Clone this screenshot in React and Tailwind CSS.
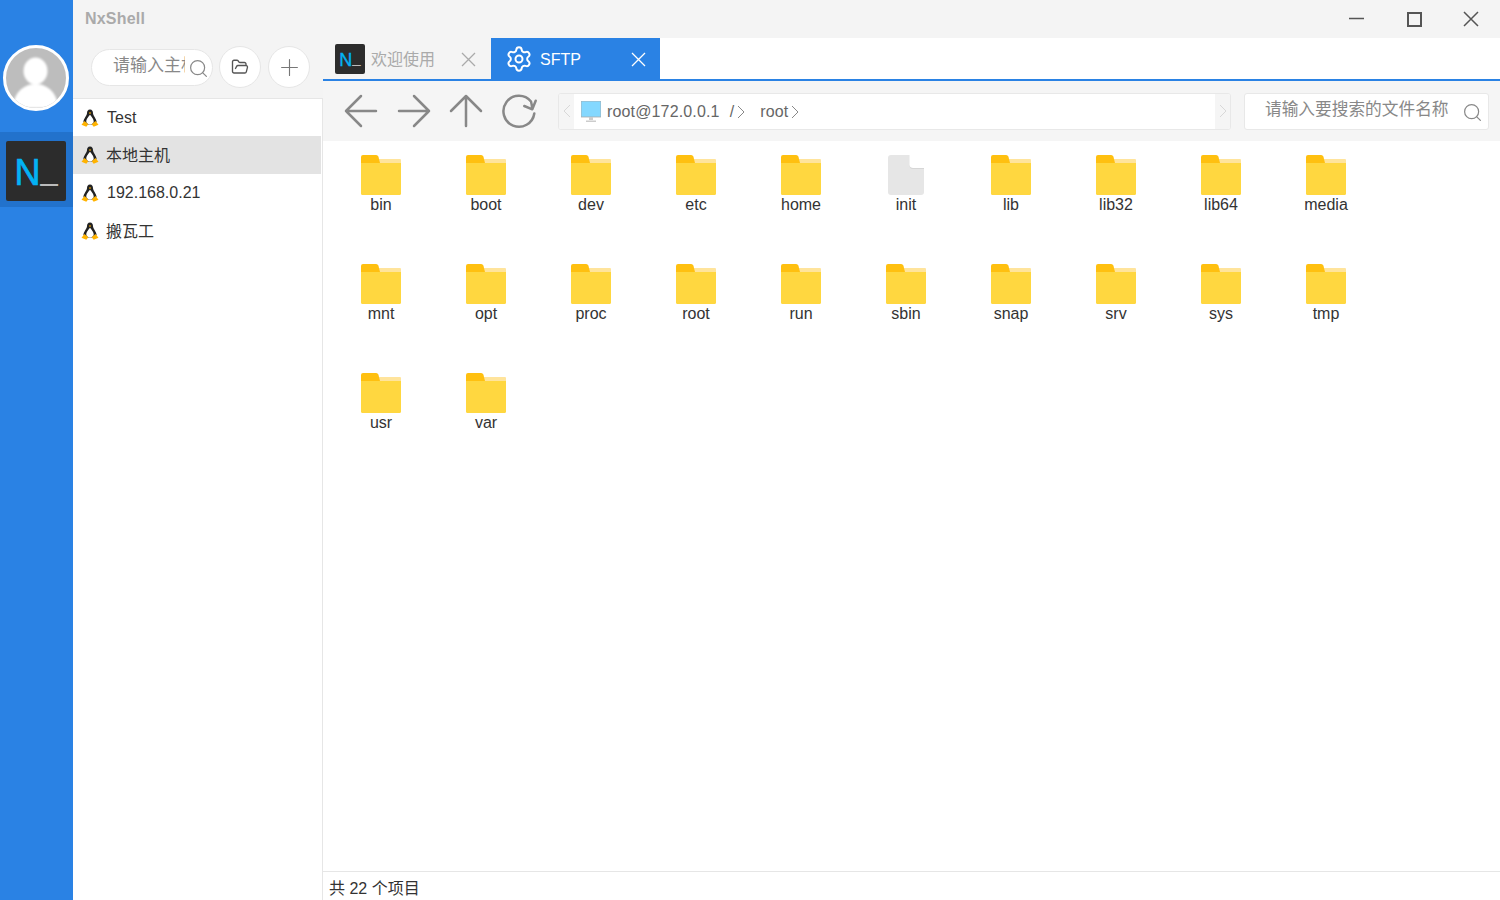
import { FolderOpen, Plus, Search, Settings } from "lucide-react";

const row1 = ["bin", "boot", "dev", "etc", "home", "init", "lib", "lib32", "lib64", "media"];
const row2 = ["mnt", "opt", "proc", "root", "run", "sbin", "snap", "srv", "sys", "tmp"];
const row3 = ["usr", "var"];
const files = [...row1, ...row2, ...row3];

const hosts = [
    { name: "Test", textClass: "" },
    { name: "本地主机", textClass: "-ml-[1px] mt-[1px]" },
    { name: "192.168.0.21", textClass: "" },
    { name: "搬瓦工", textClass: "-ml-[1px] mt-[1px]" },
];

function Penguin() {
    return (
        <svg width="18" height="18" viewBox="0 0 18 18" className="shrink-0">
            <path d="M9 0.500c-2.200 0-3 1.800-3 3.800 0 2.200-3.200 5-3.600 8.700l2 2.500h9.200l2-2.500C15.200 9.300 12 6.500 12 4.300 12 2.300 11.200 0.500 9 0.500z" fill="#222" />
            <path d="M9 5.800c-1 1.300-3.700 4.200-3.700 6.700 0 1.600 1.500 2.900 3.700 2.900s3.700-1.300 3.700-2.900c0-2.500-2.700-5.400-3.700-6.700z" fill="#fff" />
            <path d="M7.800 3.600h2.400L9 5.200z" fill="#ffb300" />
            <path d="M3.500 12 0.500 15.700l4.800 2 2-2.400zM14.500 12l3 3.700-4.800 2-2-2.400z" fill="#ffb300" />
        </svg>
    );
}

function Folder() {
    return (
        <svg width="40" height="40" viewBox="0 0 40 40">
            <path d="M18 4h21a1 1 0 0 1 1 1v5H18z" fill="#ffe49c" />
            <path d="M0 2a2 2 0 0 1 2-2h13c1.500 0 2.300 1 2.600 2.200L19 8v2H0z" fill="#ffc010" />
            <path d="M0 8h40v30.500a1.500 1.500 0 0 1-1.500 1.500H1.500A1.500 1.500 0 0 1 0 38.500z" fill="#ffd740" />
        </svg>
    );
}

function FileIcon() {
    return (
        <svg width="40" height="40" viewBox="0 0 40 40">
            <path d="M2 3a3 3 0 0 1 3-3h18.500v9.500a3.500 3.500 0 0 0 3.500 3.500h11v24a3 3 0 0 1-3 3H5a3 3 0 0 1-3-3z" fill="#e6e6e6" />
            <path d="M23.500 9.500a3.500 3.500 0 0 0 3.500 3.500h11v1H27a3.500 3.500 0 0 1-3.500-3.500z" fill="#d6d6d6" />
        </svg>
    );
}

function NavIcon({ d }) {
    return (
        <svg width="36" height="36" viewBox="0 0 36 36" fill="none" stroke="#888" strokeWidth="2.500" strokeLinecap="round" strokeLinejoin="round">
            <path d={d} />
        </svg>
    );
}

function CloseX({ stroke }) {
    return (
        <svg width="15" height="15" viewBox="0 0 15 15" fill="none" stroke={stroke} strokeWidth="1.300">
            <path d="m1 1 13 13M14 1 1 14" />
        </svg>
    );
}

function App() {
    return (
        <div className="flex h-[900px] w-[1500px] overflow-hidden bg-white font-['Liberation_Sans','Noto_Sans_CJK_SC',sans-serif] text-base text-[#333]">
            {/* left rail */}
            <div className="flex w-[73px] shrink-0 flex-col bg-[#2a82e4] pt-[45px]">
                <div className="ml-[3px] h-[66px] w-[66px] overflow-hidden rounded-full border-[3px] border-white bg-[#bdbdbd]">
                    <svg width="60" height="60" viewBox="0 0 60 60" className="blur-[1px]">
                        <ellipse cx="29.500" cy="23" rx="12" ry="13.500" fill="#fff" />
                        <path d="M7 60c0-13 9-24 22.500-24S52 47 52 60z" fill="#fff" />
                    </svg>
                </div>
                <div className="mt-[21px] h-[75px] bg-[#2272cc] pl-[6px] pt-[9px]">
                    <div className="flex h-[60px] w-[60px] items-center justify-center rounded-[2px] bg-[#2c2c2c] pt-[4px] text-[36px] leading-none">
                        <span className="text-[#03b2f5] [-webkit-text-stroke:0.7px_#03b2f5]">N</span>
                        <span className="-translate-y-[4px] text-[31px] text-[#bbb]">_</span>
                    </div>
                </div>
            </div>

            <div className="flex min-w-0 flex-1 flex-col">
                {/* title bar */}
                <div className="flex h-[38px] shrink-0 items-center justify-between bg-[#f4f4f4] pl-3">
                    <span className="text-base font-bold tracking-[0.2px] text-[#aaa]">NxShell</span>
                    <div className="flex items-center">
                        <svg width="57" height="20" viewBox="0 0 57 20" stroke="#555" strokeWidth="1.500" fill="none">
                            <path d="M20 9.500h15" />
                        </svg>
                        <svg width="57" height="20" viewBox="0 0 57 20" stroke="#555" strokeWidth="2" fill="none">
                            <rect x="22" y="4" width="13" height="13" />
                        </svg>
                        <svg width="57" height="20" viewBox="0 0 57 20" stroke="#555" strokeWidth="1.500" fill="none">
                            <path d="M21 3l14 14M35 3 21 17" />
                        </svg>
                    </div>
                </div>

                <div className="flex min-h-0 flex-1">
                    {/* host list */}
                    <div className="flex w-[250px] shrink-0 flex-col bg-white">
                        <div className="flex h-[60px] shrink-0 items-center gap-[7px] bg-[#f4f4f4] pb-[2px] pl-[18px]">
                            <div className="flex h-[37px] w-[122px] items-center rounded-full border border-[#e6e6e6] bg-white pl-[21px]">
                                <span className="mb-[2px] w-[72px] overflow-hidden whitespace-nowrap text-[17px] text-[#888]">请输入主机</span>
                                <Search size={21} strokeWidth={1.400} className="ml-[3px] mt-[3px] shrink-0 text-[#888]" />
                            </div>
                            <div className="-ml-[1px] flex h-[42px] w-[42px] items-center justify-center rounded-full border border-[#e6e6e6] bg-white">
                                <FolderOpen size={18} strokeWidth={1.800} className="text-[#555]" />
                            </div>
                            <div className="flex h-[42px] w-[42px] items-center justify-center rounded-full border border-[#e6e6e6] bg-white">
                                <Plus size={27} strokeWidth={1} className="text-[#777]" />
                            </div>
                        </div>
                        <div className="flex-1 border-r border-t border-[#e6e6e6] pr-[1px]">
                            {hosts.map((host) => (
                                <div
                                    key={host.name}
                                    className={host.name === "本地主机" ? "flex h-[38px] items-center gap-[8px] bg-[#e3e3e3] pl-[8px]" : "flex h-[38px] items-center gap-[8px] pl-[8px] first:h-[37px]"}
                                >
                                    <Penguin />
                                    <span className={host.textClass}>{host.name}</span>
                                </div>
                            ))}
                        </div>
                    </div>

                    {/* main */}
                    <div className="flex min-w-0 flex-1 flex-col">
                        <div className="flex h-[43px] shrink-0 border-b-2 border-[#2a82e4]">
                            <div className="flex w-[168px] items-center bg-[#f4f4f4] pl-[12px]">
                                <div className="flex h-[30px] w-[30px] items-center justify-center rounded-[2px] bg-[#2c2c2c] pt-[2px] text-[18px] leading-none">
                                    <span className="text-[#03b2f5] [-webkit-text-stroke:0.4px_#03b2f5]">N</span>
                                    <span className="-translate-y-[2px] text-[15px] text-[#bbb]">_</span>
                                </div>
                                <span className="ml-[6px] mt-[2px] text-[#aaa]">欢迎使用</span>
                                <div className="ml-[26px] mt-[2px]">
                                    <CloseX stroke="#aaa" />
                                </div>
                            </div>
                            <div className="flex w-[169px] items-center bg-[#2a82e4] pl-[14px] text-white">
                                <Settings size={28} strokeWidth={1.700} />
                                <span className="ml-[7px] mt-[2px]">SFTP</span>
                                <div className="ml-[50px] mt-[2px]">
                                    <CloseX stroke="#fff" />
                                </div>
                            </div>
                        </div>

                        <div className="flex h-[60px] shrink-0 items-center bg-[#f5f5f5] pl-[20px]">
                            <NavIcon d="M3 18h30M18 3 3 18l15 15" />
                            <div className="ml-[17px]">
                                <NavIcon d="M3 18h30M18 3l15 15-15 15" />
                            </div>
                            <div className="ml-[16px]">
                                <NavIcon d="M18 33V3M3 18 18 3l15 15" />
                            </div>
                            <div className="ml-[17px]">
                                <NavIcon d="M33.300 20.500A15.500 15.500 0 1 1 30 8.500Q31 12 31.300 16.300M23.300 13l8 3.300 3.400-8.600" />
                            </div>
                            <div className="ml-[21px] flex h-[37px] w-[673px] overflow-hidden rounded-[3px] border border-[#e8e8e8] bg-white">
                                <div className="flex w-[15px] shrink-0 items-center justify-center bg-[#f5f5f5] text-[#d8d8d8]">
                                    <svg width="8" height="14" viewBox="0 0 8 14" fill="none" stroke="currentColor"><path d="M7 1 1 7l6 6" /></svg>
                                </div>
                                <div className="flex flex-1 items-center pl-[7px] tracking-[0.15px] text-[#666]">
                                    <svg width="20" height="21" viewBox="0 0 20 21" className="shrink-0">
                                        <rect x="0" y="0" width="20" height="16" fill="#84d8ff" stroke="#aaa" strokeWidth="0.800" />
                                        <path d="M8 16h4v3H8zM5 19.500h10V21H5z" fill="#ccc" />
                                    </svg>
                                    <span className="ml-[6px] mt-[2px]">root@172.0.0.1</span>
                                    <span className="ml-[10px] mt-[2px]">/</span>
                                    <svg width="10" height="14" viewBox="0 0 10 14" fill="none" stroke="#888" className="ml-[2px] mt-[1px]"><path d="m2 1 6 6-6 6" /></svg>
                                    <span className="ml-[14px] mt-[2px]">root</span>
                                    <svg width="10" height="14" viewBox="0 0 10 14" fill="none" stroke="#888" className="ml-[2px] mt-[1px]"><path d="m2 1 6 6-6 6" /></svg>
                                </div>
                                <div className="flex w-[15px] shrink-0 items-center justify-center bg-[#f5f5f5] text-[#d8d8d8]">
                                    <svg width="8" height="14" viewBox="0 0 8 14" fill="none" stroke="currentColor"><path d="m1 1 6 6-6 6" /></svg>
                                </div>
                            </div>
                            <div className="ml-[13px] flex h-[37px] w-[245px] items-center rounded-[3px] border border-[#e8e8e8] bg-white pl-[20px]">
                                <span className="mb-[2px] whitespace-nowrap text-[16.700px] text-[#888]">请输入要搜索的文件名称</span>
                                <Search size={21} strokeWidth={1.400} className="ml-[13px] mt-[2px] shrink-0 text-[#888]" />
                            </div>
                        </div>

                        {/* files */}
                        <div className="min-h-0 flex-1 pl-[5.500px] pt-[14px]">
                            <div className="grid grid-cols-[repeat(10,105px)] auto-rows-[109px]">
                                {files.map((name) => (
                                    <div key={name} className="flex flex-col items-center">
                                        {name === "init" ? <FileIcon /> : <Folder />}
                                        <span className="pt-[1px] leading-[18px]">{name}</span>
                                    </div>
                                ))}
                            </div>
                        </div>

                        <div className="flex h-[29px] shrink-0 items-center border-t border-[#e6e6e6] pl-[6px] pt-[5px]">共 22 个项目</div>
                    </div>
                </div>
            </div>
        </div>
    );
}

export default App;
